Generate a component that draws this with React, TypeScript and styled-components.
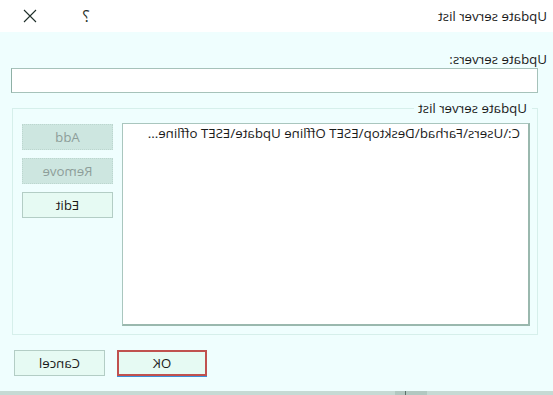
import React from "react";
import styled, { createGlobalStyle } from "styled-components";

const Global = createGlobalStyle`
  html, body { margin: 0; padding: 0; background: #ffffff; }
  #root { width: 553px; height: 395px; overflow: hidden; }
`;

const FONT = `"Open Sans", "Noto Sans", "Liberation Sans", sans-serif`;

/* The reference is a horizontally mirrored capture: the whole window is flipped. */
const Window = styled.div`
  width: 553px;
  height: 395px;
  display: flex;
  flex-direction: column;
  transform: scaleX(-1);
  font-family: ${FONT};
  font-size: 13.3px;
  color: #1b1b1b;
  background: #effefe;
`;

const TitleBar = styled.div`
  height: 32px;
  flex: none;
  display: flex;
  align-items: center;
  background: #ffffff;
  padding: 0 2px 0 6px;
`;

const Title = styled.div`
  flex: 1;
  line-height: 16px;
  color: #1a1a1a;
  margin-top: -1px;
`;

const TitleButton = styled.div`
  width: 56px;
  height: 32px;
  display: flex;
  align-items: center;
  justify-content: center;
  color: #1f2f2a;
  font-size: 16px;
  line-height: 16px;
`;

const Body = styled.div`
  flex: 1;
  display: flex;
  flex-direction: column;
  padding: 19px 11px 0 15px;
`;

const FieldLabel = styled.div`
  line-height: 16px;
  margin-left: -9px;
`;

const TextInput = styled.div`
  margin-top: 1px;
  height: 25px;
  box-sizing: border-box;
  background: #ffffff;
  border: 1px solid #a6c2ba;
  border-right-color: #8fb0a6;
`;

const GroupBox = styled.div`
  position: relative;
  margin: 15px 1px 0 0;
  height: 227px;
  box-sizing: border-box;
  border: 1px solid #d6efeb;
  padding: 14px 9px 8px 7px;
  display: flex;
  gap: 9px;
`;

const Legend = styled.div`
  position: absolute;
  top: -9px;
  left: 5px;
  padding: 0 4px 0 5px;
  background: #effefe;
  line-height: 16px;
`;

const ListBox = styled.div`
  width: 408px;
  box-sizing: border-box;
  background: #ffffff;
  border: 1px solid #a9c6be;
  border-left: 2px solid #9ab8ae;
  border-bottom: 2px solid #9ab8ae;
  padding: 1px 0 0 8px;
  overflow: hidden;
`;

const ListItem = styled.div`
  line-height: 16px;
  white-space: nowrap;
`;

const SideButtons = styled.div`
  width: 91px;
  display: flex;
  flex-direction: column;
  gap: 8px;
  padding-top: 1px;
`;

const Button = styled.div<{ $disabled?: boolean; $primary?: boolean; $w?: number }>`
  width: ${(p) => p.$w ?? 91}px;
  height: 26px;
  box-sizing: border-box;
  display: flex;
  align-items: center;
  justify-content: center;
  line-height: 16px;
  background: ${(p) => (p.$disabled ? "#cde6e0" : "#e6faf3")};
  color: ${(p) => (p.$disabled ? "#8d9e9a" : "#1b1b1b")};
  border: ${(p) =>
    p.$primary ? "2px solid #c0514f" : p.$disabled ? "1px dotted #bcd6cf" : "1px solid #b3cdc5"};
  box-shadow: ${(p) => (p.$primary ? "0 1px 0 #3b8fd9" : "none")};
`;

const Footer = styled.div`
  display: flex;
  justify-content: flex-end;
  gap: 12px;
  margin-top: 15px;
  padding-right: 3px;
`;

const BottomStrip = styled.div`
  height: 4px;
  flex: none;
  background: #c6dad4;
  display: flex;
  padding-left: 126px;
`;

const StripMark = styled.div`
  width: 32px;
  background: #b2c8c1;
  border-right: 10px solid #b2c8c1;
  box-shadow: inset -1px 0 0 #5b6f69;
  box-sizing: border-box;
  position: relative;
`;

const CloseIcon = () => (
  <svg width="14" height="14" viewBox="0 0 14 14" fill="none">
    <path d="M1 1 L13 13 M13 1 L1 13" stroke="#1f2f2a" strokeWidth="1.1" />
  </svg>
);

export default function App() {
  return (
    <>
      <Global />
      <Window>
        <TitleBar>
          <Title>Update server list</Title>
          <TitleButton>?</TitleButton>
          <TitleButton>
            <CloseIcon />
          </TitleButton>
        </TitleBar>
        <Body>
          <FieldLabel>Update servers:</FieldLabel>
          <TextInput />
          <GroupBox>
            <Legend>Update server list</Legend>
            <ListBox>
              <ListItem>C:\Users\Farhad\Desktop\ESET Offline Update\ESET offline...</ListItem>
            </ListBox>
            <SideButtons>
              <Button $disabled>Add</Button>
              <Button $disabled>Remove</Button>
              <Button>Edit</Button>
            </SideButtons>
          </GroupBox>
          <Footer>
            <Button $primary $w={90}>OK</Button>
            <Button>Cancel</Button>
          </Footer>
        </Body>
        <BottomStrip>
          <StripMark />
        </BottomStrip>
      </Window>
    </>
  );
}
